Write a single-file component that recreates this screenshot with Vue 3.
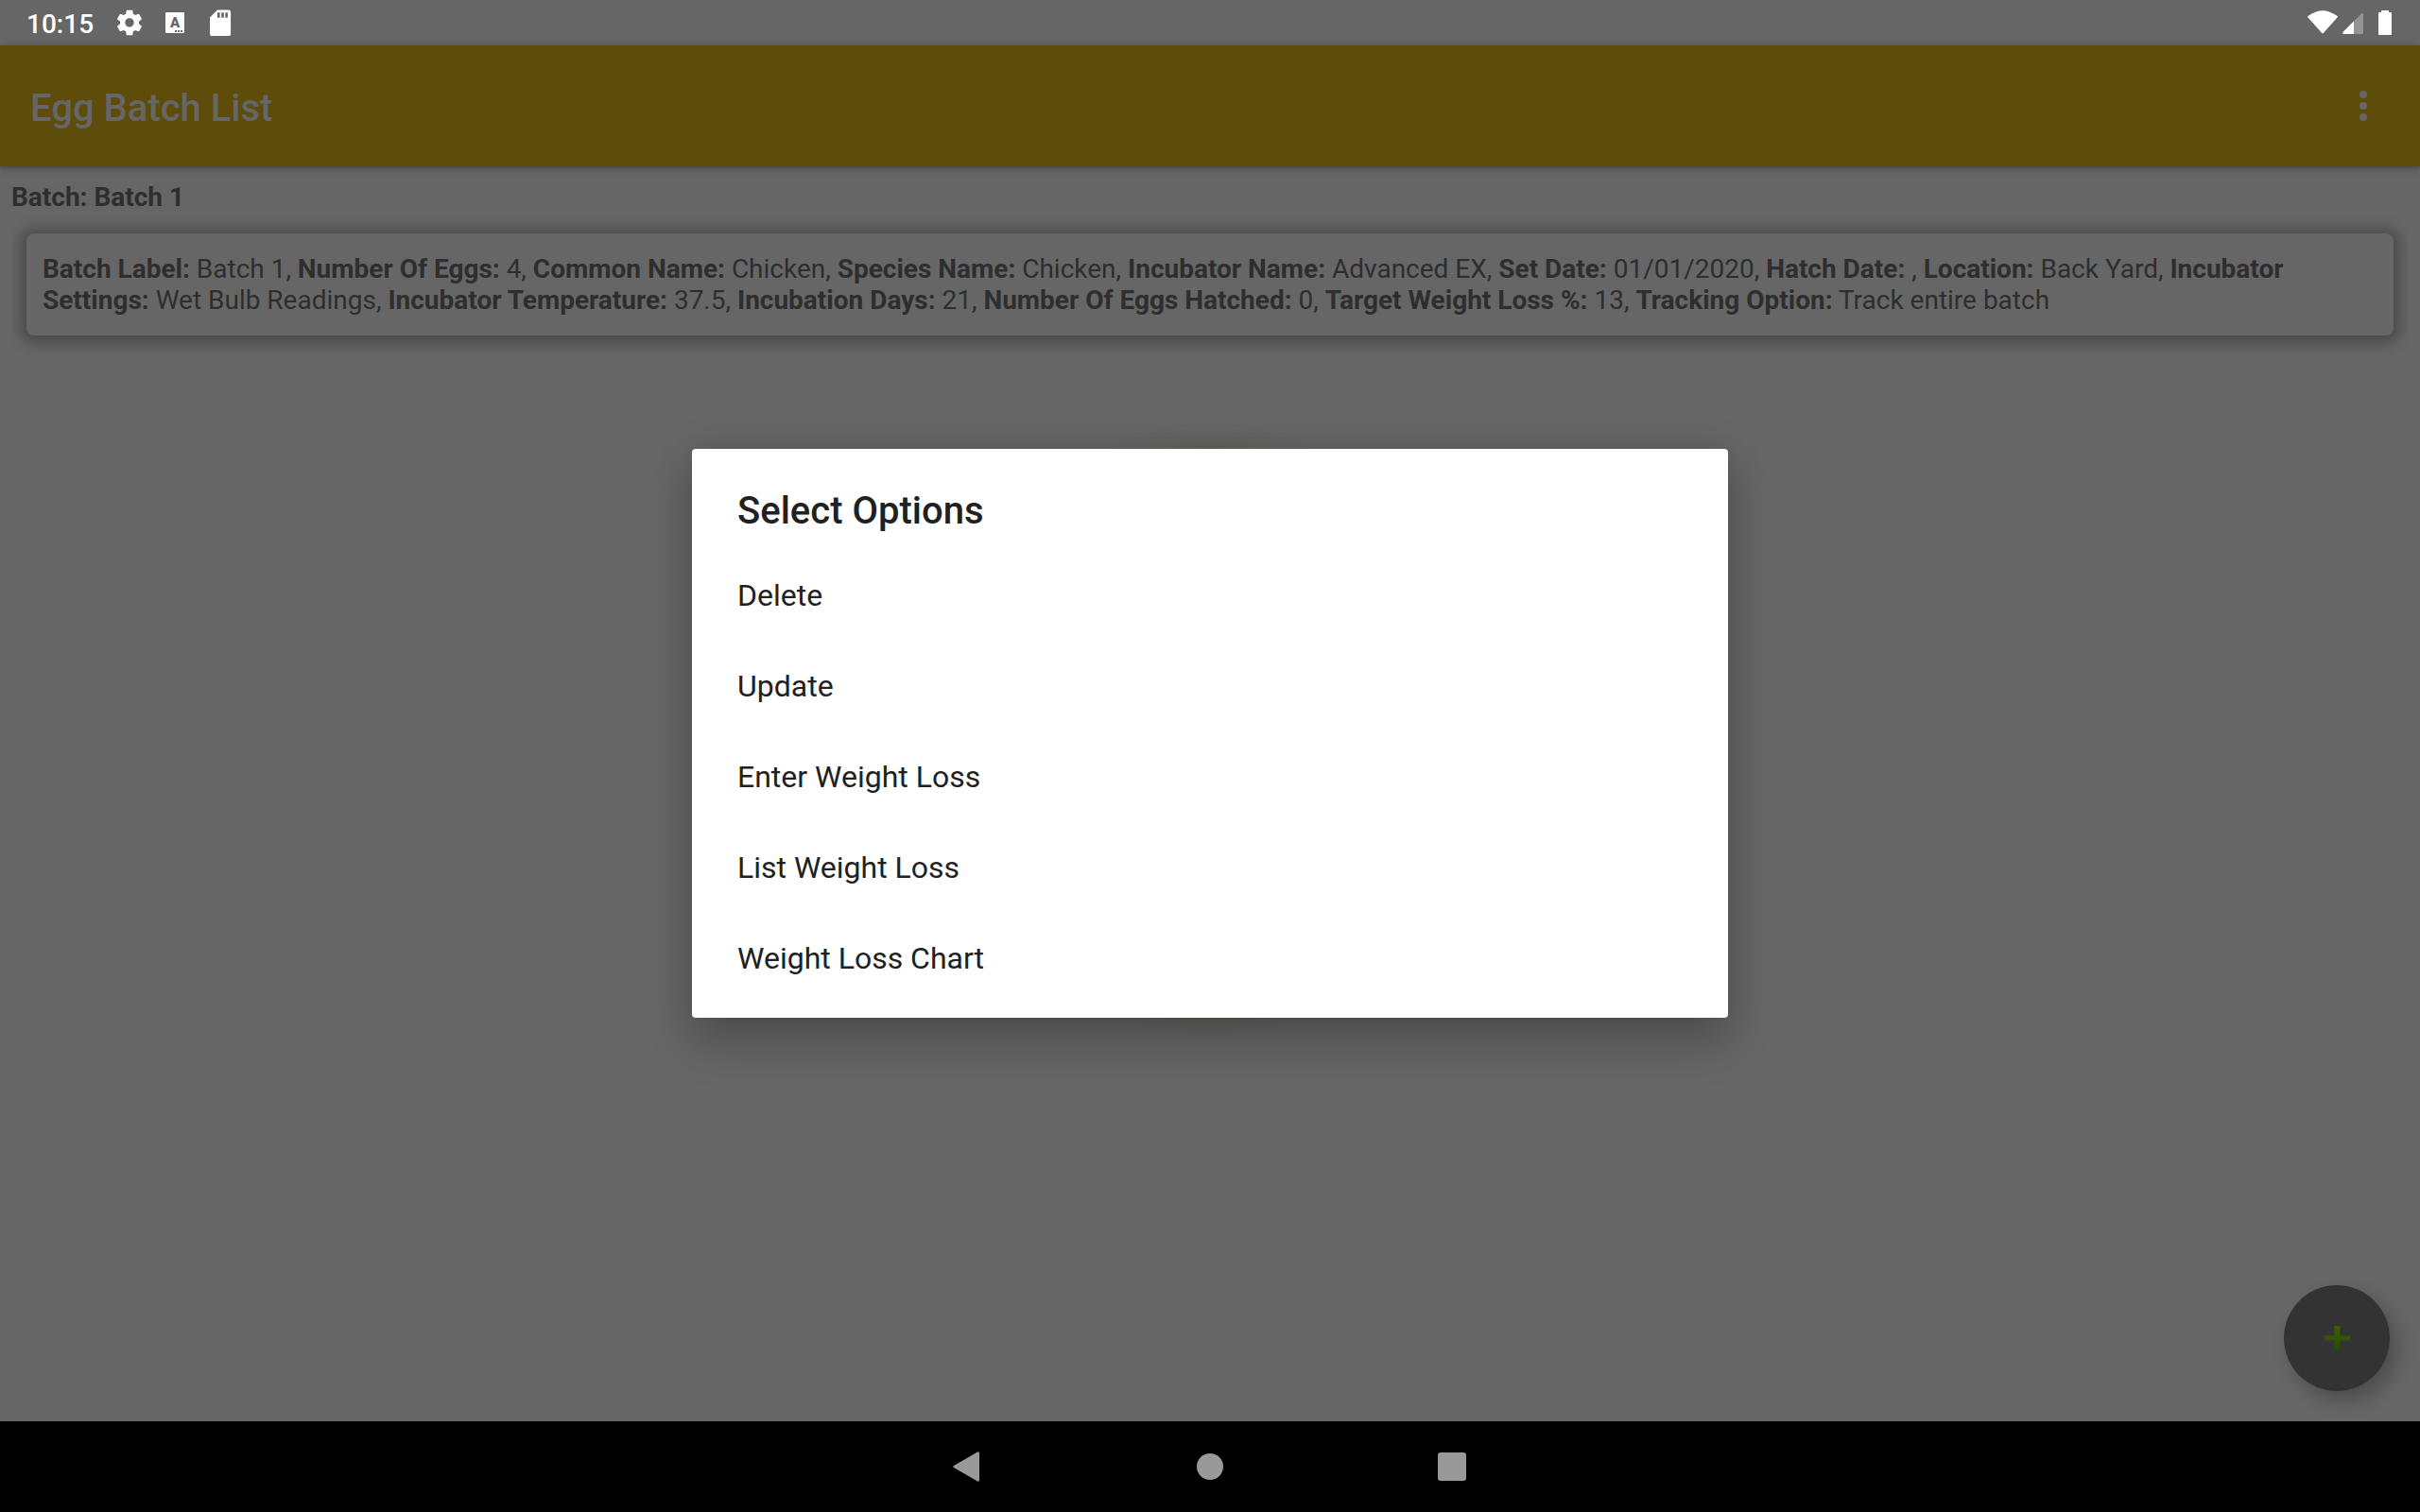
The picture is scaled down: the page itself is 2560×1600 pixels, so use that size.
<script setup>
const batch = [
  ['Batch Label', 'Batch 1'],
  ['Number Of Eggs', '4'],
  ['Common Name', 'Chicken'],
  ['Species Name', 'Chicken'],
  ['Incubator Name', 'Advanced EX'],
  ['Set Date', '01/01/2020'],
  ['Hatch Date', ''],
  ['Location', 'Back Yard'],
  ['Incubator Settings', 'Wet Bulb Readings'],
  ['Incubator Temperature', '37.5'],
  ['Incubation Days', '21'],
  ['Number Of Eggs Hatched', '0'],
  ['Target Weight Loss %', '13'],
  ['Tracking Option', 'Track entire batch']
]
const options = ['Delete', 'Update', 'Enter Weight Loss', 'List Weight Loss', 'Weight Loss Chart']
</script>

<template>
  <div class="screen">
    <div class="status">
      <span class="time">10:15</span>
      <svg class="s-icon" viewBox="0 0 32 32" aria-hidden="true">
        <g transform="scale(1.3333)">
          <path fill="#fff" d="M19.43 12.98c.04-.32.07-.64.07-.98s-.03-.66-.07-.98l2.11-1.65c.19-.15.24-.42.12-.64l-2-3.46c-.12-.22-.39-.3-.61-.22l-2.49 1c-.52-.4-1.08-.73-1.69-.98l-.38-2.65C14.46 2.18 14.25 2 14 2h-4c-.25 0-.46.18-.49.42l-.38 2.65c-.61.25-1.17.59-1.69.98l-2.49-1c-.23-.09-.49 0-.61.22l-2 3.46c-.13.22-.07.49.12.64l2.11 1.65c-.04.32-.07.65-.07.98s.03.66.07.98l-2.11 1.65c-.19.15-.24.42-.12.64l2 3.46c.12.22.39.3.61.22l2.49-1c.52.4 1.08.73 1.69.98l.38 2.65c.03.24.24.42.49.42h4c.25 0 .46-.18.49-.42l.38-2.65c.61-.25 1.17-.59 1.69-.98l2.49 1c.23.09.49 0 .61-.22l2-3.46c.12-.22.07-.49-.12-.64l-2.11-1.65zM12 15.5c-1.93 0-3.5-1.57-3.5-3.5s1.57-3.5 3.5-3.5 3.5 1.57 3.5 3.5-1.57 3.5-3.5 3.5z" />
        </g>
      </svg>
      <span class="lang" aria-hidden="true"><b>A</b><i></i></span>
      <svg class="s-icon" viewBox="0 0 32 32" aria-hidden="true">
        <path fill="#fff" fill-rule="evenodd" d="M13 2.500H24.500a2.600 2.600 0 0 1 2.600 2.600V27.500a2.600 2.600 0 0 1-2.600 2.600H7.600A2.600 2.600 0 0 1 5 27.500V10.500ZM13 5.300v5.400h2.600V5.300ZM17.200 5.300v5.400h2.600V5.300ZM21.300 5.300v5.400h2.600V5.300Z" />
      </svg>
      <span class="grow"></span>
      <svg class="signals" viewBox="0 0 90 32" aria-hidden="true">
        <path fill="#fff" d="M0.800 8.800Q16 -2.500 31.200 8.800Q32.200 9.600 31.500 10.400L17 26.700Q16 27.800 15 26.700L0.500 10.400Q-0.200 9.600 0.800 8.800Z" />
        <path fill="#949494" d="M49 14.500L57 6.500Q59 5.200 59 7.500V26.500Q59 28 57.500 28H49Z" />
        <path fill="#fff" d="M49 14.200V28H38Q36.300 27.500 37.500 26Z" />
        <path fill="#fff" d="M78 3h8v2h2.500q.5 0 .5 1V28q0 1-1 1H76q-1 0-1-1V6q0-1 .5-1H78Z" />
      </svg>
    </div>

    <header class="appbar">
      <h1>Egg Batch List</h1>
      <button class="more" aria-label="More options">
        <svg viewBox="0 0 8 32"><circle cx="4" cy="4" r="4" /><circle cx="4" cy="16" r="4" /><circle cx="4" cy="28" r="4" /></svg>
      </button>
    </header>

    <main class="content">
      <h2>Batch: Batch 1</h2>
      <div class="list">
        <p class="card"><template v-for="([label, value], i) in batch" :key="label"><b>{{ label }}:</b>{{ ' ' + value + (i < batch.length - 1 ? ', ' : '') }}</template></p>
      </div>
      <button class="fab" aria-label="Add batch">
        <svg viewBox="0 0 28 28">
          <defs>
            <linearGradient id="plus" x1="0" y1="0" x2="0" y2="1">
              <stop offset="0" stop-color="#3b6200" />
              <stop offset="1" stop-color="#2a4a00" />
            </linearGradient>
          </defs>
          <path fill="url(#plus)" d="M11.500 1h6v10.500H28v5H17.500V27h-6V16.500H1v-5h10.500Z" />
        </svg>
      </button>
      <div class="egg"></div>
      <section class="dialog" role="dialog" aria-labelledby="dialog-title">
        <h3 id="dialog-title">Select Options</h3>
        <button v-for="option in options" :key="option" class="option">{{ option }}</button>
      </section>
    </main>

    <nav class="navbar">
      <button aria-label="Back"><svg viewBox="0 0 32 32"><path d="M26 0.500Q28 -0.500 28 2V30Q28 32.500 26 31.500L1 17Q-0.500 16 1 15Z" /></svg></button>
      <button aria-label="Home"><svg viewBox="0 0 32 32"><circle cx="16" cy="16" r="14" /></svg></button>
      <button aria-label="Recent apps"><svg viewBox="0 0 32 32"><rect x="1" y="1" width="30" height="30" rx="3" /></svg></button>
    </nav>
  </div>
</template>

<style>
body {
  background: #666;
}
</style>

<style scoped>
.screen {
  min-height: 100vh;
  display: flex;
  flex-direction: column;
  background: #666;
  font-family: Roboto, sans-serif;
}
button {
  border: 0;
  padding: 0;
  background: none;
  font: inherit;
  cursor: pointer;
}
h1, h2, h3, p {
  margin: 0;
}
svg {
  display: block;
}
.status {
  display: flex;
  align-items: center;
  height: 48px;
  padding: 0 29px 0 28px;
  box-sizing: border-box;
  color: #fff;
}
.time {
  font-size: 28px;
  font-weight: 500;
  line-height: 33px;
  margin: 2px 22px 0 0;
}
.s-icon {
  width: 32px;
  height: 32px;
}
.lang {
  position: relative;
  width: 20px;
  height: 22px;
  margin: 0 22px;
  border-radius: 1px;
  background: #fff;
  color: #666;
}
.lang b {
  display: block;
  font-size: 15px;
  font-weight: 900;
  line-height: 22px;
  text-align: center;
}
.lang i {
  position: absolute;
  right: 1px;
  bottom: 1px;
  width: 9px;
  height: 2px;
  background: repeating-linear-gradient(90deg, #666 0 2px, #fff 2px 3px);
}
.grow {
  flex: 1;
}
.signals {
  width: 90px;
  height: 32px;
}
.appbar {
  position: relative;
  z-index: 1;
  display: flex;
  align-items: center;
  justify-content: space-between;
  height: 128px;
  padding: 0 32px;
  background: #5e4d0a;
  box-shadow: 0 2px 8px rgba(0, 0, 0, 0.35);
  color: #666;
}
h1 {
  font-size: 40px;
  font-weight: 500;
  line-height: 48px;
  margin-top: 6px;
}
.more {
  width: 56px;
  height: 96px;
}
.more svg {
  width: 8px;
  height: 32px;
  margin: auto;
  fill: #666;
}
.content {
  position: relative;
  flex: 1;
  padding: 16px 12px;
  color: #2e2e2e;
  font-size: 28px;
  line-height: 33px;
}
h2 {
  font-size: 28px;
  font-weight: 700;
  line-height: 33px;
}
.list {
  overflow: hidden;
  padding: 22px 16px;
}
.card {
  padding: 21px 17px;
  border-radius: 8px;
  background: #666;
  box-shadow: 0 2px 14px 7px rgba(0, 0, 0, 0.26);
}
.egg {
  position: absolute;
  top: 50%;
  left: 50%;
  width: 480px;
  height: 624px;
  margin-top: -64px;
  border-radius: 50%;
  background: rgba(94, 85, 50, 0.18);
  filter: blur(8px);
  transform: translate(-50%, -50%);
}
.dialog {
  position: absolute;
  top: 50%;
  left: 50%;
  width: 1096px;
  max-width: 100%;
  box-sizing: border-box;
  padding: 42px 0 15px;
  margin-top: -64px;
  border-radius: 4px;
  background: #fff;
  color: #212121;
  box-shadow: 0 28px 48px rgba(0, 0, 0, 0.2), 0 0 40px rgba(0, 0, 0, 0.12);
  transform: translate(-50%, -50%);
}
h3 {
  padding: 0 48px 18px;
  font-size: 40px;
  font-weight: 500;
  line-height: 47px;
}
.option {
  display: block;
  width: 100%;
  height: 96px;
  padding: 0 48px;
  color: #212121;
  font-size: 32px;
  text-align: left;
}
.fab {
  position: absolute;
  right: 32px;
  bottom: 32px;
  display: grid;
  place-items: center;
  width: 112px;
  height: 112px;
  border-radius: 50%;
  background: #333;
  box-shadow: 8px 10px 20px rgba(0, 0, 0, 0.25);
}
.fab svg {
  width: 28px;
  height: 28px;
}
.navbar {
  display: flex;
  justify-content: center;
  height: 96px;
  background: #000;
}
.navbar button {
  display: grid;
  place-items: center;
  width: 256px;
}
.navbar svg {
  width: 32px;
  height: 32px;
  fill: #999;
}
</style>
